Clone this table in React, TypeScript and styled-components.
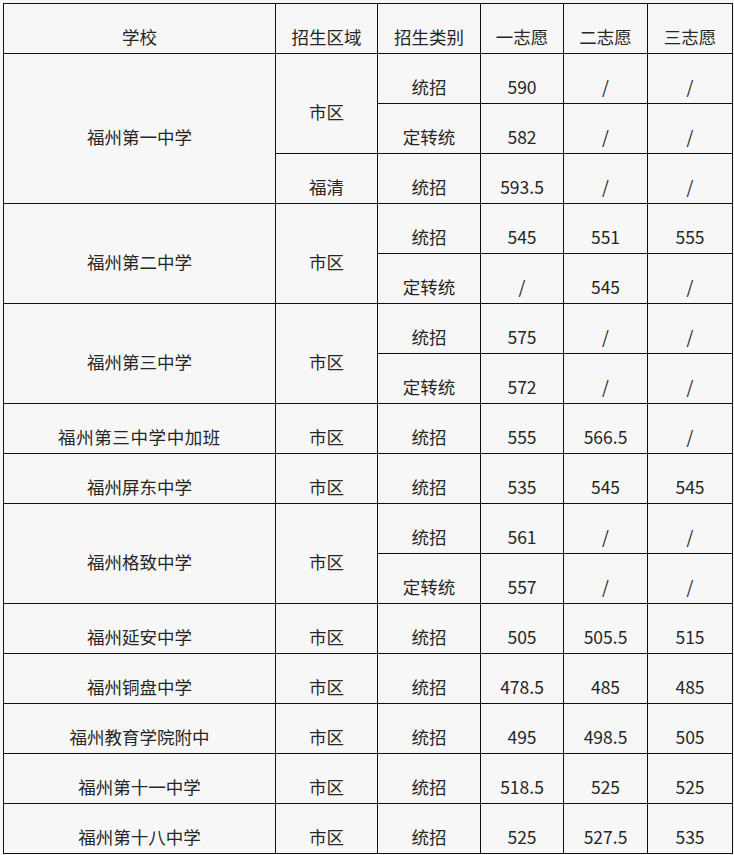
import styled, { createGlobalStyle } from 'styled-components'

const GlobalStyle = createGlobalStyle`
	html, body {
		margin: 0;
		background: #f7f7f7;
	}
	body {
		padding: 3px 0 0 3px;
		font-family: "Noto Sans CJK SC", "Noto Sans", sans-serif;
		color: #262626;
	}
`;

const Table = styled.table`
	border-collapse: collapse;
	table-layout: fixed;
	width: 730px;
	background: #f7f7f7;
`;

const Row = styled.tr`
	height: 50px;
`;

const Cell = styled.td<{ $spread?: number }>`
	border: 1px solid #111;
	padding: 17px 0 0 0;
	text-align: center;
	vertical-align: middle;
	font-size: 17.5px;
	font-weight: 400;
	line-height: 24px;
	white-space: nowrap;
	letter-spacing: ${(props) => (props.$spread ? `${props.$spread}px` : 'normal')};
`;

const HeadCell = styled(Cell).attrs({ as: 'th' })``;

type CellData = { text: string; rowSpan?: number; spread?: number }

const widths = [272, 102, 103, 83, 84, 85]

const headers = ['学校', '招生区域', '招生类别', '一志愿', '二志愿', '三志愿']

const rows: CellData[][] = [
	[{ text: '福州第一中学', rowSpan: 3 }, { text: '市区', rowSpan: 2 }, { text: '统招' }, { text: '590' }, { text: '/' }, { text: '/' }],
	[{ text: '定转统' }, { text: '582' }, { text: '/' }, { text: '/' }],
	[{ text: '福清' }, { text: '统招' }, { text: '593.5' }, { text: '/' }, { text: '/' }],
	[{ text: '福州第二中学', rowSpan: 2 }, { text: '市区', rowSpan: 2 }, { text: '统招' }, { text: '545' }, { text: '551' }, { text: '555' }],
	[{ text: '定转统' }, { text: '/' }, { text: '545' }, { text: '/' }],
	[{ text: '福州第三中学', rowSpan: 2 }, { text: '市区', rowSpan: 2 }, { text: '统招' }, { text: '575' }, { text: '/' }, { text: '/' }],
	[{ text: '定转统' }, { text: '572' }, { text: '/' }, { text: '/' }],
	[{ text: '福州第三中学中加班', spread: 0.6 }, { text: '市区' }, { text: '统招' }, { text: '555' }, { text: '566.5' }, { text: '/' }],
	[{ text: '福州屏东中学' }, { text: '市区' }, { text: '统招' }, { text: '535' }, { text: '545' }, { text: '545' }],
	[{ text: '福州格致中学', rowSpan: 2 }, { text: '市区', rowSpan: 2 }, { text: '统招' }, { text: '561' }, { text: '/' }, { text: '/' }],
	[{ text: '定转统' }, { text: '557' }, { text: '/' }, { text: '/' }],
	[{ text: '福州延安中学' }, { text: '市区' }, { text: '统招' }, { text: '505' }, { text: '505.5' }, { text: '515' }],
	[{ text: '福州铜盘中学' }, { text: '市区' }, { text: '统招' }, { text: '478.5' }, { text: '485' }, { text: '485' }],
	[{ text: '福州教育学院附中' }, { text: '市区' }, { text: '统招' }, { text: '495' }, { text: '498.5' }, { text: '505' }],
	[{ text: '福州第十一中学' }, { text: '市区' }, { text: '统招' }, { text: '518.5' }, { text: '525' }, { text: '525' }],
	[{ text: '福州第十八中学' }, { text: '市区' }, { text: '统招' }, { text: '525' }, { text: '527.5' }, { text: '535' }],
]

function App() {
	return (
		<>
			<GlobalStyle />
			<Table>
				<colgroup>
					{widths.map((w, i) => (
						<col key={i} style={{ width: w }} />
					))}
				</colgroup>
				<thead>
					<Row>
						{headers.map((h) => (
							<HeadCell key={h}>{h}</HeadCell>
						))}
					</Row>
				</thead>
				<tbody>
					{rows.map((cells, r) => (
						<Row key={r}>
							{cells.map((c, i) => (
								<Cell key={i} rowSpan={c.rowSpan} $spread={c.spread}>
									{c.text}
								</Cell>
							))}
						</Row>
					))}
				</tbody>
			</Table>
		</>
	);
}

export default App;
